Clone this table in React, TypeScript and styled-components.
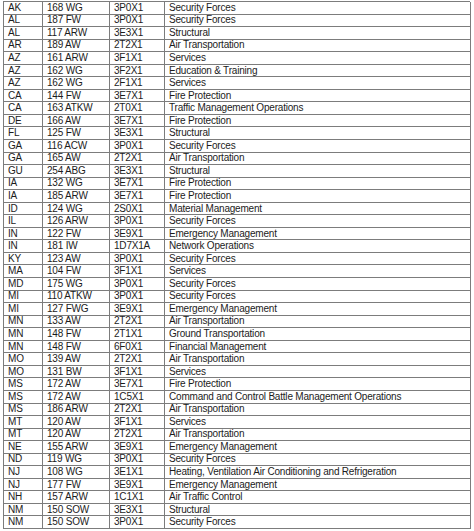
import React from "react";
import styled, { createGlobalStyle } from "styled-components";

const Global = createGlobalStyle`
  html, body { margin: 0; padding: 0; background: #ffffff; }
  body { font-family: "Liberation Sans", Arial, sans-serif; }
`;

const Page = styled.div`
  padding: 1px 0 0 3px;
  background: #ffffff;
`;

const Grid = styled.div`
  display: grid;
  grid-template-columns: 39px 67px 55px 306px;
  grid-auto-rows: 12.56px;
  width: 467px;
  box-sizing: border-box;
  border-top: 1px solid #7c7c7c;
  border-left: 1px solid #7c7c7c;
  font-family: "Liberation Sans", Arial, sans-serif;
  font-size: 10px;
  letter-spacing: -0.2px;
  color: #1c1c1c;
`;

const Cell = styled.div`
  box-sizing: border-box;
  border-right: 1px solid #7c7c7c;
  border-bottom: 1px solid #7c7c7c;
  padding: 0 0 0 4px;
  display: flex;
  align-items: center;
  line-height: 10px;
  white-space: nowrap;
  overflow: hidden;
`;

const rows: [string, string, string, string][] = [
  ["AK", "168 WG", "3P0X1", "Security Forces"],
  ["AL", "187 FW", "3P0X1", "Security Forces"],
  ["AL", "117 ARW", "3E3X1", "Structural"],
  ["AR", "189 AW", "2T2X1", "Air Transportation"],
  ["AZ", "161 ARW", "3F1X1", "Services"],
  ["AZ", "162 WG", "3F2X1", "Education & Training"],
  ["AZ", "162 WG", "2F1X1", "Services"],
  ["CA", "144 FW", "3E7X1", "Fire Protection"],
  ["CA", "163 ATKW", "2T0X1", "Traffic Management Operations"],
  ["DE", "166 AW", "3E7X1", "Fire Protection"],
  ["FL", "125 FW", "3E3X1", "Structural"],
  ["GA", "116 ACW", "3P0X1", "Security Forces"],
  ["GA", "165 AW", "2T2X1", "Air Transportation"],
  ["GU", "254 ABG", "3E3X1", "Structural"],
  ["IA", "132 WG", "3E7X1", "Fire Protection"],
  ["IA", "185 ARW", "3E7X1", "Fire Protection"],
  ["ID", "124 WG", "2S0X1", "Material Management"],
  ["IL", "126 ARW", "3P0X1", "Security Forces"],
  ["IN", "122 FW", "3E9X1", "Emergency Management"],
  ["IN", "181 IW", "1D7X1A", "Network Operations"],
  ["KY", "123 AW", "3P0X1", "Security Forces"],
  ["MA", "104 FW", "3F1X1", "Services"],
  ["MD", "175 WG", "3P0X1", "Security Forces"],
  ["MI", "110 ATKW", "3P0X1", "Security Forces"],
  ["MI", "127 FWG", "3E9X1", "Emergency Management"],
  ["MN", "133 AW", "2T2X1", "Air Transportation"],
  ["MN", "148 FW", "2T1X1", "Ground Transportation"],
  ["MN", "148 FW", "6F0X1", "Financial Management"],
  ["MO", "139 AW", "2T2X1", "Air Transportation"],
  ["MO", "131 BW", "3F1X1", "Services"],
  ["MS", "172 AW", "3E7X1", "Fire Protection"],
  ["MS", "172 AW", "1C5X1", "Command and Control Battle Management Operations"],
  ["MS", "186 ARW", "2T2X1", "Air Transportation"],
  ["MT", "120 AW", "3F1X1", "Services"],
  ["MT", "120 AW", "2T2X1", "Air Transportation"],
  ["NE", "155 ARW", "3E9X1", "Emergency Management"],
  ["ND", "119 WG", "3P0X1", "Security Forces"],
  ["NJ", "108 WG", "3E1X1", "Heating, Ventilation Air Conditioning and Refrigeration"],
  ["NJ", "177 FW", "3E9X1", "Emergency Management"],
  ["NH", "157 ARW", "1C1X1", "Air Traffic Control"],
  ["NM", "150 SOW", "3E3X1", "Structural"],
  ["NM", "150 SOW", "3P0X1", "Security Forces"],
];

export default function App() {
  return (
    <>
      <Global />
      <Page>
        <Grid>
          {rows.map((r, i) => (
            <React.Fragment key={i}>
              <Cell>{r[0]}</Cell>
              <Cell>{r[1]}</Cell>
              <Cell>{r[2]}</Cell>
              <Cell>{r[3]}</Cell>
            </React.Fragment>
          ))}
        </Grid>
      </Page>
    </>
  );
}
